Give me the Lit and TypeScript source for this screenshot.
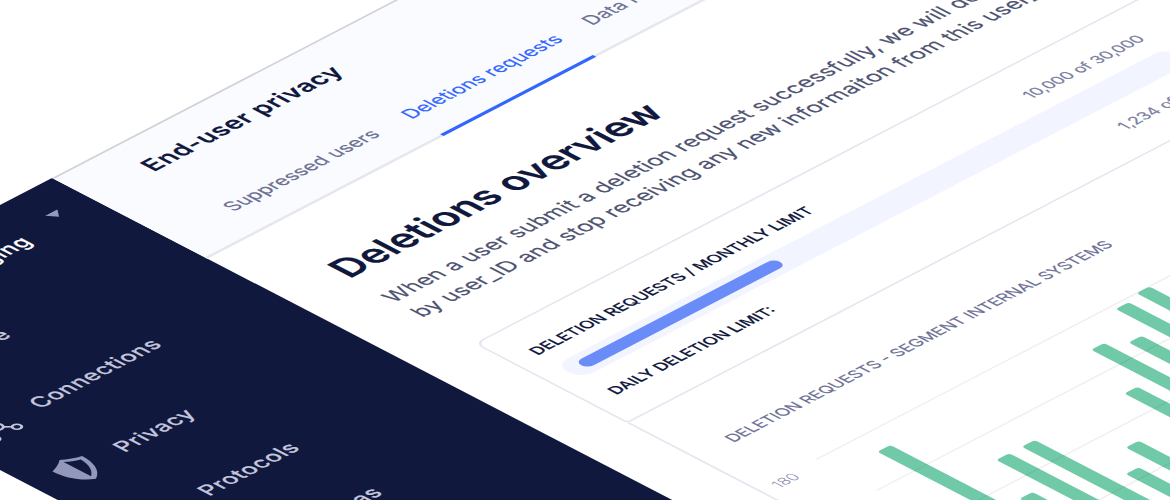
import { LitElement, html, svg, css } from "lit";
import { customElement } from "lit/decorators.js";

const BARS: Array<[number, number]> = [
  [168, 761.7], [197, 892.8], [226, 837.5], [254.7, 837.6], [283.6, 925.7], [312.4, 897],
  [341.3, 960], [370.2, 837.6], [399, 771.4], [428, 784.7], [457, 741], [485.8, 735.8], [514.7, 800],
];
const LINES = [735.5, 803.2, 870.9, 938.6, 1006.3];

@customElement("app-sidebar")
class AppSidebar extends LitElement {
  static styles = css`
    :host { display: block; width: 346px; height: 900px; background: #10183e; color: #c3c5dc;
      font: 500 22px/26px Inter, sans-serif; letter-spacing: 0.5px; }
    .workspace { display: flex; align-items: flex-start; justify-content: flex-end; gap: 35.5px; height: 93.5px;
      box-sizing: border-box; padding: 37px 31px 0 30px; color: #fff; white-space: nowrap; }
    .name { padding-top: 1.5px; }
    .workspace svg { width: 14px; height: 9px; display: block; fill: #9498bb; }
    .item { display: flex; align-items: center; height: 95px; padding-left: 24px; gap: 25px; box-sizing: border-box; }
    .icon { width: 40px; height: 44px; display: block; overflow: visible; }
  `;
  render() {
    const connections = svg`<g fill="none" stroke="#c3c5dc" stroke-width="2.5">
      <circle cx="32.500" cy="36" r="3.800"/><circle cx="21" cy="25" r="5"/><circle cx="7" cy="37" r="3.800"/><circle cx="20" cy="8" r="3.800"/>
      <path d="M24.600 28.500L29.800 33.300M17.200 28.300L9.900 34.500M20.700 20L20.200 11.800"/></g>`;
    const shield = svg`<path fill="#9397b9" fill-rule="evenodd" d="M20.500 1C25.500 5 31.500 8 37.500 9.500C37.500 23 31.500 36 20.500 42C9.500 36 4 23 4 9.500C9 8 15.500 5 20.500 1Z M20.500 5.500V36.500C28 31 32 23 33 12.500C28 11 24 8.500 20.500 5.500Z"/>`;
    const home = svg`<path fill="#c3c5dc" d="M20 4L37 20H32V38H8V20H3Z"/>`;
    const proto = svg`<rect x="8" y="15" width="20" height="20" rx="4" fill="none" stroke="#c3c5dc" stroke-width="2.400"/>`;
    const items: Array<[string, unknown]> = [["Home", home], ["Connections", connections], ["Privacy", shield], ["Protocols", proto], ["Personas", home]];
    return html`
      <div class="workspace"><span class="name">Segment Staging</span><svg viewBox="0 0 14 9"><path d="M0 0H14L7 9Z" /></svg></div>
      ${items.map(([label, icon]) => html`<div class="item"><svg class="icon" viewBox="0 0 40 44">${icon}</svg><span>${label}</span></div>`)}
    `;
  }
}

@customElement("app-chart")
class AppChart extends LitElement {
  static styles = css`
    :host { display: block; }
    svg { display: block; width: 760px; height: 560px; }
    .axis { font: 300 15px Inter, sans-serif; fill: #8d90b0; }
  `;
  render() {
    return html`<svg viewBox="60.2 680 760 560">
      ${BARS.map(([x, y]) => svg`<rect x=${x} y=${y} width="14.6" height=${1140 - y} rx="3.2" fill="#70caa8"/>`)}
      ${LINES.map((y) => svg`<path d=${`M125.500 ${y}H818`} stroke="#1e5046" stroke-opacity=".09" stroke-width="1.6"/>`)}
      <text class="axis" x="73" y="746.5">180</text>
      <text class="axis" x="73" y="814">160</text>
    </svg>`;
  }
}

@customElement("app-root")
class AppRoot extends LitElement {
  static styles = css`
    :host { display: block; position: relative; width: 1170px; height: 500px; overflow: hidden; background: #fff;
      font-family: Inter, sans-serif; color: #10183e; }
    .plane { position: absolute; left: 0; top: 0; width: 1346px; height: 1300px; display: grid;
      grid-template-columns: 346px 1fr; transform-origin: 0 0; -webkit-text-stroke: 0.2px currentColor;
      transform: matrix(0.888, -0.461, 0.888, 0.461, -255.25, 337.5); }
    .header { box-sizing: border-box; height: 174.5px; background: #fafbff; border-top: 2px solid #d1d2d8;
      border-bottom: 3px solid #e5e7ee; padding: 24px 0 0 64px; }
    .title { font-size: 24.6px; font-weight: 600; line-height: 32px; height: 32px; letter-spacing: 0.7px; }
    .tabs { display: flex; gap: 31px; margin-top: 59.5px; height: 57px; }
    .tab { font-size: 19.3px; letter-spacing: 0.15px; line-height: 28px; color: #6b7094; height: 56px; box-sizing: border-box; white-space: nowrap; }
    .first { padding-left: 1px; margin-right: 2.7px; }
    .active { color: #3366ff; border-bottom: 4px solid #3366ff; height: 57px; }
    .content { padding: 64.5px 0 0 58px; }
    .heading { font-size: 38.7px; font-weight: 600; line-height: 48px; }
    .copy { font-size: 22px; letter-spacing: 0.19px; line-height: 32px; color: #4f5472; margin: 16.5px 0 0 -1px; white-space: nowrap; }
    .card { box-sizing: border-box; width: 900px; height: 172.5px; margin-top: 49.5px; border: 2px solid #e6e6f0;
      border-radius: 10px 10px 0 4px; padding: 28.5px 187px 0 20px; }
    .row { display: flex; justify-content: space-between; font-size: 16.1px; line-height: 24px; font-weight: 500; padding: 0 3px 0 1px; }
    .amount { color: #7b7fa0; font-weight: 400; font-size: 16px; }
    .track { height: 30px; box-sizing: border-box; border-radius: 15px; background: #f2f5ff; padding: 8px 15px; margin: 14px 0 19.5px; }
    .row:last-child { padding-left: 2.5px; }
    .fill { width: 34%; height: 14px; border-radius: 7px; background: #698cf8; }
    .panel { width: 900px; height: 640px; border-left: 2px solid #e6e6f0; box-sizing: border-box; }
    .caption { font-size: 16.1px; line-height: 24px; color: #6b7094; padding: 63px 0 3px 36.5px; }
  `;
  render() {
    return html`<div class="plane">
      <app-sidebar></app-sidebar>
      <main>
        <div class="header">
          <div class="title">End-user privacy</div>
          <div class="tabs"><div class="tab first">Suppressed users</div><div class="tab active">Deletions requests</div><div class="tab">Data retention</div></div>
        </div>
        <div class="content">
          <div class="heading">Deletions overview</div>
          <div class="copy">When a user submit a deletion request successfully, we will delete all<br />by user_ID and stop receiving any new informaiton from this user_ID</div>
          <div class="card">
            <div class="row"><span>DELETION REQUESTS / MONTHLY LIMIT</span><span class="amount">10,000 of 30,000</span></div>
            <div class="track"><div class="fill"></div></div>
            <div class="row"><span>DAILY DELETION LIMIT:</span><span class="amount">1,234 of 3,000</span></div>
          </div>
          <div class="panel"><div class="caption">DELETION REQUESTS - SEGMENT INTERNAL SYSTEMS</div><app-chart></app-chart></div>
        </div>
      </main>
    </div>`;
  }
}
